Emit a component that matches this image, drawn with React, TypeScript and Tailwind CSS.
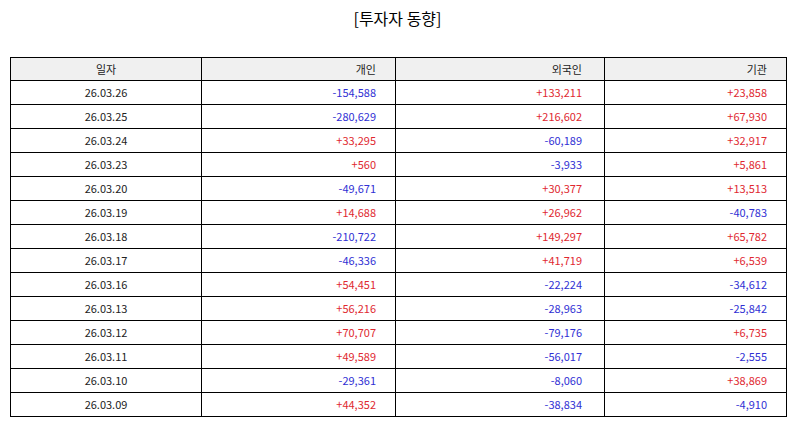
const rows: [string, string, string, string][] = [
  ["26.03.26", "-154,588", "+133,211", "+23,858"],
  ["26.03.25", "-280,629", "+216,602", "+67,930"],
  ["26.03.24", "+33,295", "-60,189", "+32,917"],
  ["26.03.23", "+560", "-3,933", "+5,861"],
  ["26.03.20", "-49,671", "+30,377", "+13,513"],
  ["26.03.19", "+14,688", "+26,962", "-40,783"],
  ["26.03.18", "-210,722", "+149,297", "+65,782"],
  ["26.03.17", "-46,336", "+41,719", "+6,539"],
  ["26.03.16", "+54,451", "-22,224", "-34,612"],
  ["26.03.13", "+56,216", "-28,963", "-25,842"],
  ["26.03.12", "+70,707", "-79,176", "+6,735"],
  ["26.03.11", "+49,589", "-56,017", "-2,555"],
  ["26.03.10", "-29,361", "-8,060", "+38,869"],
  ["26.03.09", "+44,352", "-38,834", "-4,910"],
];

const pads = ["pr-[19px]", "pr-[22px]", "pr-[19px]"];

function tone(v: string) {
  return v.startsWith("-") ? "text-[#3030d4]" : "text-[#e02830]";
}

export default function App() {
  return (
    <div className="h-[425px] w-[795px] bg-white font-['Noto_Sans_CJK_KR','Noto_Sans',sans-serif] text-[#222]">
      <h1 className="pt-[6px] text-center text-[16px] leading-[24px] text-black">[투자자 동향]</h1>
      <table className="ml-[10px] mt-[27px] w-[776px] table-fixed border-collapse text-[11px]">
        <colgroup>
          <col className="w-[191px]" />
          <col className="w-[194px]" />
          <col className="w-[209px]" />
          <col className="w-[182px]" />
        </colgroup>
        <thead>
          <tr className="h-[23px] bg-[#f0f0f0]">
            <th className="border-[1.5px] border-black p-0 text-center font-normal">일자</th>
            <th className={`border-[1.5px] border-black p-0 text-right font-normal ${pads[0]}`}>개인</th>
            <th className={`border-[1.5px] border-black p-0 text-right font-normal ${pads[1]}`}>외국인</th>
            <th className={`border-[1.5px] border-black p-0 text-right font-normal ${pads[2]}`}>기관</th>
          </tr>
        </thead>
        <tbody>
          {rows.map(([date, a, b, c]) => (
            <tr key={date} className="h-[24px]">
              <td className="border-[1.5px] border-black p-0 text-center">{date}</td>
              <td className={`border-[1.5px] border-black p-0 text-right ${pads[0]} ${tone(a)}`}>{a}</td>
              <td className={`border-[1.5px] border-black p-0 text-right ${pads[1]} ${tone(b)}`}>{b}</td>
              <td className={`border-[1.5px] border-black p-0 text-right ${pads[2]} ${tone(c)}`}>{c}</td>
            </tr>
          ))}
        </tbody>
      </table>
    </div>
  );
}
